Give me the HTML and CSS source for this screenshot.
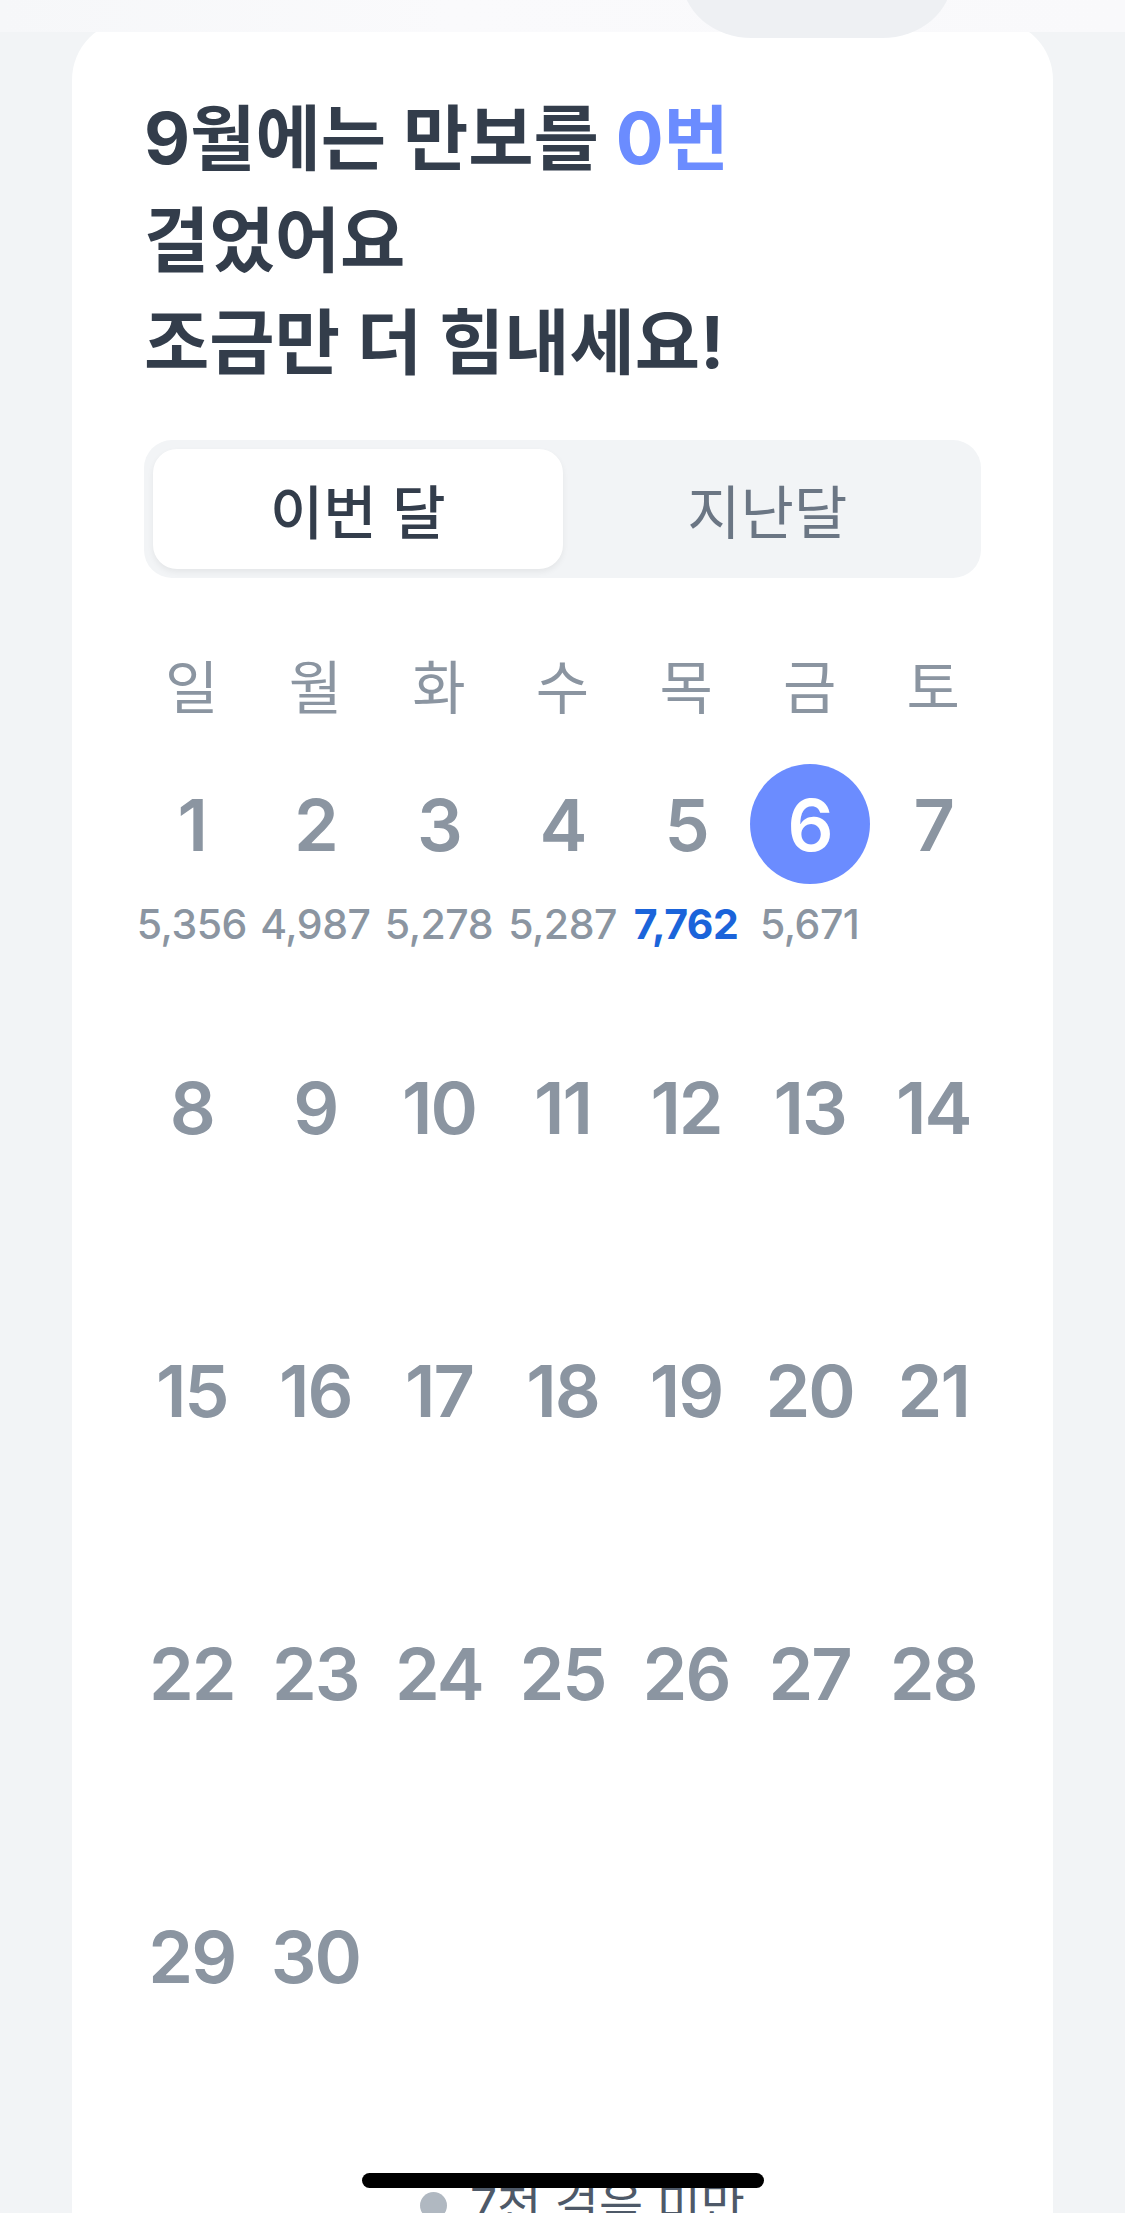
FILE: index.html
```html
<!DOCTYPE html>
<html lang="ko">
<head>
  <meta charset="UTF-8" />
  <title>만보 캘린더</title>
  <link rel="stylesheet" href="styles.css">
</head>
<body>
<!-- blurred header peeking over the sheet -->
<div class="top-fade">
  <div class="top-handle"></div>
</div>

<main class="page">
  <section class="card">
    <h1 class="headline">9월에는 만보를 <em>0번</em><br>걸었어요<br>조금만 더 힘내세요!</h1>

    <div class="tabs">
      <button class="tab active">이번 달</button>
      <button class="tab">지난달</button>
    </div>

    <div class="calendar">
      <div class="weekdays">
        <span>일</span><span>월</span><span>화</span><span>수</span><span>목</span><span>금</span><span>토</span>
      </div>

      <div class="days">
        <div class="day"><span class="num">1</span><span class="steps">5,356</span></div>
        <div class="day"><span class="num">2</span><span class="steps">4,987</span></div>
        <div class="day"><span class="num">3</span><span class="steps">5,278</span></div>
        <div class="day"><span class="num">4</span><span class="steps">5,287</span></div>
        <div class="day"><span class="num">5</span><span class="steps best">7,762</span></div>
        <div class="day today"><span class="num">6</span><span class="steps">5,671</span></div>
        <div class="day"><span class="num">7</span></div>

        <div class="day"><span class="num">8</span></div>
        <div class="day"><span class="num">9</span></div>
        <div class="day"><span class="num">10</span></div>
        <div class="day"><span class="num">11</span></div>
        <div class="day"><span class="num">12</span></div>
        <div class="day"><span class="num">13</span></div>
        <div class="day"><span class="num">14</span></div>

        <div class="day"><span class="num">15</span></div>
        <div class="day"><span class="num">16</span></div>
        <div class="day"><span class="num">17</span></div>
        <div class="day"><span class="num">18</span></div>
        <div class="day"><span class="num">19</span></div>
        <div class="day"><span class="num">20</span></div>
        <div class="day"><span class="num">21</span></div>

        <div class="day"><span class="num">22</span></div>
        <div class="day"><span class="num">23</span></div>
        <div class="day"><span class="num">24</span></div>
        <div class="day"><span class="num">25</span></div>
        <div class="day"><span class="num">26</span></div>
        <div class="day"><span class="num">27</span></div>
        <div class="day"><span class="num">28</span></div>

        <div class="day"><span class="num">29</span></div>
        <div class="day"><span class="num">30</span></div>
      </div>
    </div>

    <div class="legend">
      <span class="dot"></span>
      <span>7천 걸음 미만</span>
    </div>
  </section>
</main>

<div class="home-bar"></div>
</body>
</html>
```

FILE: styles.css
```css
body {
  margin: 0;
  background: #f2f4f6;
  font-family: Inter, "Noto Sans CJK KR", sans-serif;
  color: #333d4b;
}

/* header that sits over the sheet */
.top-fade {
  position: fixed;
  top: 0;
  left: 0;
  right: 0;
  height: 32px;
  background: linear-gradient(90deg, #f6f7f9, #fafafc 40%, #f9f9fb);
  z-index: 10;
}

.top-handle {
  position: absolute;
  left: 682px;
  top: -40px;
  width: 270px;
  height: 78px;
  background: #eef0f3;
  border-radius: 0 0 70px 70px / 0 0 60px 60px;
}

.page {
  padding-top: 20px;
}

.card {
  margin: 0 72px;
  padding: 67px 72px 0;
  background: #fff;
  border-radius: 60px 60px 0 0;
  min-height: 2300px;
  box-sizing: border-box;
}

.headline {
  margin: 0;
  font-size: 71px;
  line-height: 102px;
  font-weight: 700;
  letter-spacing: 0;
  color: #333d4b;
}

.headline em {
  font-style: normal;
  color: #6b8cff;
}

/* segmented control */
.tabs {
  display: flex;
  margin-top: 47px;
  padding: 9px;
  background: #f2f4f6;
  border-radius: 28px;
}

.tabs .tab {
  flex: 1;
  height: 120px;
  border: none;
  border-radius: 24px;
  background: transparent;
  font-family: Inter, "Noto Sans CJK KR", sans-serif;
  font-size: 58px;
  color: #6b7684;
  cursor: pointer;
}

.tabs .tab.active {
  background: #fff;
  color: #333d4b;
  font-weight: 500;
  box-shadow: 0 3px 6px rgba(0, 0, 0, 0.06);
}

/* calendar */
.calendar {
  margin: 71px -14px 0;
}

.weekdays,
.days {
  display: grid;
  grid-template-columns: repeat(7, 1fr);
}

.weekdays span {
  text-align: center;
  font-size: 58px;
  line-height: 78px;
  color: #8b95a1;
}

.days {
  margin-top: 37px;
  grid-auto-rows: 283px;
}

.day {
  display: flex;
  flex-direction: column;
  align-items: center;
}

.day .num {
  width: 120px;
  height: 120px;
  border-radius: 50%;
  display: flex;
  align-items: center;
  justify-content: center;
  font-size: 72px;
  font-weight: 600;
  letter-spacing: -2px;
  color: #8b95a1;
}

.day.today .num {
  background: #6b8cff;
  color: #fff;
}

.day .steps {
  margin-top: 17px;
  font-size: 41px;
  line-height: 46px;
  font-weight: 500;
  letter-spacing: -0.5px;
  color: #8b95a1;
  white-space: nowrap;
}

.day .steps.best {
  color: #1b64da;
  font-weight: 700;
}

.legend {
  display: flex;
  align-items: center;
  gap: 23px;
  margin-top: -4px;
  padding-left: 276px;
  font-size: 48px;
  line-height: 60px;
  color: #4e5968;
}

.legend .dot {
  width: 27px;
  height: 27px;
  border-radius: 50%;
  background: #b0b8c1;
}

.home-bar {
  position: fixed;
  left: 362px;
  bottom: 25px;
  width: 402px;
  height: 15px;
  border-radius: 8px;
  background: #000;
  z-index: 20;
}
```
